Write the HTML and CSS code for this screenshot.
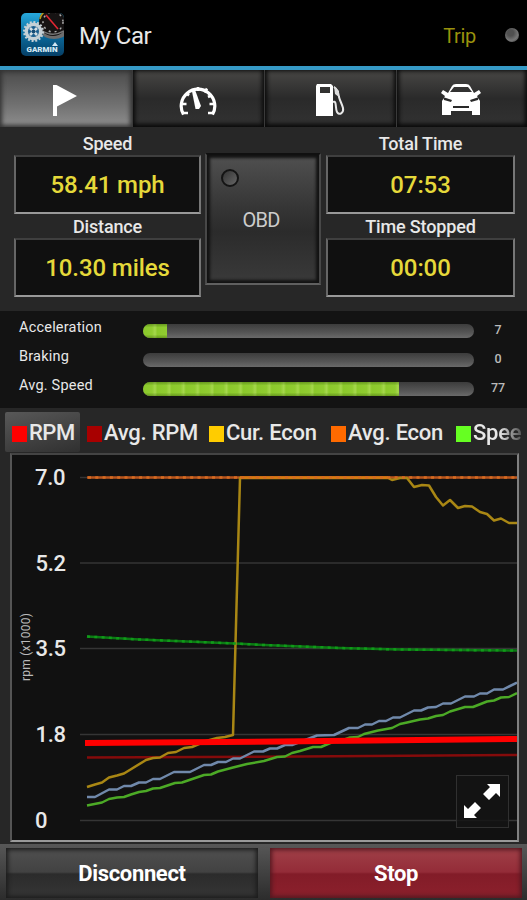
FILE: index.html
```
<!DOCTYPE html>
<html lang="en">

<head>
	<meta charset="UTF-8">
	<meta name="viewport" content="width=device-width, initial-scale=1.0">
	<title>My Car</title>
	<link rel="stylesheet" href="styles.css">
</head>

<body>
	<div class="app">
		<header class="header">
			<svg class="logo" viewBox="0 0 43 43">
				<defs>
					<linearGradient id="logoBg" x1="0" y1="0" x2="0" y2="1">
						<stop offset="0" stop-color="#27a9dc" />
						<stop offset="0.5" stop-color="#0b6c9e" />
						<stop offset="1" stop-color="#063f66" />
					</linearGradient>
					<clipPath id="logoClip"><rect width="43" height="43" rx="5" /></clipPath>
				</defs>
				<g clip-path="url(#logoClip)">
					<rect width="43" height="43" fill="url(#logoBg)" />
					<ellipse cx="33" cy="20" rx="12" ry="6" fill="#6d6d6d" />
					<circle cx="32" cy="9" r="14" fill="#161313" />
					<path d="M19 6a13 13 0 0 1 4-7" fill="none" stroke="#b69a19" stroke-width="1.5" />
					<circle cx="32" cy="9" r="10" fill="none" stroke="#aaa" stroke-width="1.5" stroke-dasharray="2 4" />
					<path d="M20 17q11 8 23 1" fill="none" stroke="#777" stroke-width="1.5" />
					<path d="M25 2l12 14" stroke="#e32632" stroke-width="1.6" />
					<circle cx="12.500" cy="18.500" r="9" fill="#c5d0d6" />
					<circle cx="12.500" cy="18.500" r="9.500" fill="none" stroke="#c5d0d6" stroke-width="2" stroke-dasharray="2 1.700" />
					<circle cx="12.500" cy="18.500" r="5.500" fill="#1c5f8f" />
					<path d="M9 15l7 7M9 22l7-7" stroke="#d5dfe4" stroke-width="2.500" />
					<circle cx="12.500" cy="18.500" r="2" fill="#164c75" />
					<path d="M31 33l3-4 3 4z" fill="#d3e8f3" />
					<text x="5.500" y="38.500" textLength="31" lengthAdjust="spacingAndGlyphs" class="logoText">GARMIN</text>
				</g>
			</svg>
			<h1 class="title">My Car</h1>
			<span class="trip">Trip</span>
			<span class="led"></span>
		</header>

		<nav class="tabs">
			<button class="tab active" aria-label="Trip">
				<svg width="24" height="31" viewBox="0 0 24 31">
					<path d="M0 0h3.500L24 11 4 21.500V31H0z" fill="#fff" />
				</svg>
			</button>
			<button class="tab" aria-label="Gauges">
				<svg width="38" height="32" viewBox="0 0 38 32">
					<g fill="none" stroke="#fff">
						<path d="M4.500 30.500A16.800 16.800 0 1 1 33.500 30.500" stroke-width="3.200" />
						<path d="M3 20h4.500M7 9l3 2.500M19 3v4M28 4.500l-2.500 4M33 11l-4 2M35 20h-4.500M3.500 29h5.500M34.500 29h-5.500" stroke-width="2.600" />
					</g>
					<path d="M12.500 5l3-.500 6.500 17.500-2 3-3.500 0z" fill="#fff" />
				</svg>
			</button>
			<button class="tab" aria-label="Fuel">
				<svg width="30" height="32" viewBox="0 0 30 32">
					<path d="M2 0h14l2 2v30H1V2zM5 3v6h10V3z" fill="#fff" fill-rule="evenodd" />
					<path d="M18 18c4-2 2 6 4 10 2 4 7 1 6-4-1-4-3-7-4-11-.500-5-2-8-5-10" fill="none" stroke="#e8e8e8" stroke-width="2" />
					<path d="M19 2l5 5v6l-4-3z" fill="#ddd" />
				</svg>
			</button>
			<button class="tab" aria-label="Vehicle">
				<svg width="40" height="32" viewBox="0 0 40 32">
					<path d="M7 9l4-7q1-2 4-2h10q3 0 4 2l4 7 5-3 2 3-4 3 3 5v14h-8v-4H10v4H1V17l3-5-4-3 2-3zM13 3l-4 5h22l-4-5z" fill="#fff" fill-rule="evenodd" />
					<path d="M2 13l9 3-1 2-7-2zM38 13l-9 3 1 2 7-2zM12 22h16v2H12z" fill="#292929" />
				</svg>
			</button>
		</nav>

		<section class="summary">
			<div class="metrics">
				<div class="label">Speed</div>
				<div class="readout">58.41 mph</div>
				<div class="label">Distance</div>
				<div class="readout">10.30 miles</div>
			</div>
			<div class="obdSlot">
				<button class="obd">
					<span class="obdLed"></span>
					<span class="obdText">OBD</span>
				</button>
			</div>
			<div class="metrics">
				<div class="label">Total Time</div>
				<div class="readout">07:53</div>
				<div class="label">Time Stopped</div>
				<div class="readout">00:00</div>
			</div>
		</section>

		<section class="meters">
			<div class="meter">
				<span class="meterName">Acceleration</span>
				<div class="track"><div class="fill" style="width: 7.300%"></div></div>
				<span class="meterValue">7</span>
			</div>
			<div class="meter">
				<span class="meterName">Braking</span>
				<div class="track"><div class="fill" style="width: 0%"></div></div>
				<span class="meterValue">0</span>
			</div>
			<div class="meter">
				<span class="meterName">Avg. Speed</span>
				<div class="track"><div class="fill" style="width: 77.300%"></div></div>
				<span class="meterValue">77</span>
			</div>
		</section>

		<div class="legend">
			<div class="series selected"><i class="swatch red"></i>RPM</div>
			<div class="series"><i class="swatch darkRed"></i>Avg. RPM</div>
			<div class="series"><i class="swatch yellow"></i>Cur. Econ</div>
			<div class="series"><i class="swatch orange"></i>Avg. Econ</div>
			<div class="series fading"><i class="swatch green"></i>Spee</div>
		</div>

		<section class="chart">
			<svg class="plot" viewBox="12 455 505 385">
				<path class="grid" d="M80 477.500H517M80 563H517M80 648.500H517M80 734.500H517M80 820.500H517" />
				<g class="axis">
					<text x="35" y="485">7.0</text>
					<text x="35.500" y="570.500">5.2</text>
					<text x="35.500" y="656">3.5</text>
					<text x="35.500" y="742">1.8</text>
					<text x="35" y="828">0</text>
				</g>
				<text class="unit" transform="translate(29.500 681) rotate(-90)" textLength="68">rpm (x1000)</text>

				<g class="lines">
					<path stroke="#b9541c" d="M87 477.500H517" />
					<path stroke="#0c7a14" d="M87 636.500L140 639.500 235 643.500 264 645 340 648 400 649.500 517 650.500" />
					<path stroke="#850b0b" d="M87 757.500L300 756.500 517 755" />
					<path stroke="#a98714" d="M87 787L95 784.500 102 782.500 109 777.500 117 775.500 124 773.500 146 760 153 758 160 757.500 168 753 176 752 184 748 192 747 206 741 217 738 225 737 233 735 240 478H388L392 480 400 478H407L414 487 422 485 429 485.500 436 497 443 505.500 450 500 458 508 465 506 472 506.500 480 512 487 514 494 520.500 501 518.500 509 523H517" />
					<path stroke="#7089ab" d="M87 797H95L109 789.500H117L124 786H131L139 782.500H146L153 779H160L174 772H190L204 765H211L218 762H226L233 758.500H240L254 751.500H263L270 748.500H277L285 745H292L317 735.500 334 735 349 728H358L365 724.500H372L379 721H386L393 717.500H400L414 710.500H421L428 707.500 436 707 443 703.500H451L465 696.500H474L480 693.500H487L494 689.500H503L517 682.500" />
					<path stroke="#4caa26" d="M87 805.500L102 802.500 109 799 117 797.500 124 797 131 794.500 139 792 146 791 153 788.500 160 788 175 783 182 782.500 204 775 211 774.500 218 771.500 233 767.500 247 764 264 761 277 757 285 756.500 292 753 300 751 313 747H321L335 741 343 740 350 737.500 358 737 364 734 378 730.500 392 728 400 724 407 722.500 420 719.500 428 718.500 436 716 443 715 450 711.500 465 707H473L487 701.500 494 700.500 501 697.500 509 697 517 693" />
					<path stroke="#d97812" d="M240 477.500H388" />
				</g>
				<g class="dots">
					<path stroke="#d56b22" d="M88 477.500H517" />
					<path stroke="#109a19" d="M87 636.500L140 639.500 235 643.500 264 645 340 648 400 649.500 517 650.500" />
				</g>
				<path class="current" d="M85 743L280 741.500 517 739" />
			</svg>
			<button class="expand" aria-label="Expand chart">
				<svg width="36" height="36" viewBox="0 0 36 36">
					<path d="M23 1h13v13l-4-4-7 7-6-6 7-7zM13 35H0V22l4 4 7-7 6 6-7 7z" fill="#fff" />
				</svg>
			</button>
		</section>

		<footer class="actions">
			<button class="action">Disconnect</button>
			<button class="action stop">Stop</button>
		</footer>
	</div>
</body>

</html>
```
FILE: styles.css
```
body,
html {
	margin: 0;
	padding: 0;
	height: 100%;
	background-color: #272727;
}

button {
	margin: 0;
	padding: 0;
	border: none;
	font: inherit;
	color: inherit;
	cursor: pointer;
}

svg {
	display: block;
}

.app {
	width: 527px;
	height: 900px;
	display: flex;
	flex-direction: column;
	overflow: hidden;
	font-family: Roboto, "Liberation Sans", sans-serif;
	color: #e8e8e8;
}

.header {
	flex: 0 0 66px;
	display: flex;
	align-items: center;
	padding: 4px 8px 0 21px;
	box-sizing: border-box;
	background-color: #000;
}

.logo {
	width: 43px;
	height: 43px;
	margin-top: -2px;
}

.logoText {
	font-size: 6.500px;
	font-weight: 900;
	fill: #d3e8f3;
}

.title {
	flex: 1;
	margin: 2px 0 0 15px;
	font-size: 24px;
	font-weight: 400;
	line-height: 28px;
	letter-spacing: -0.500px;
}

.trip {
	margin: 2px 29px 0 0;
	font-size: 20px;
	letter-spacing: -0.300px;
	color: #99920d;
}

.led {
	width: 14px;
	height: 14px;
	border-radius: 50%;
	background: radial-gradient(circle at 40% 35%, #505050 25%, #777 60%, #333);
}

.tabs {
	flex: 0 0 61px;
	display: grid;
	grid-template-columns: 132px 132px 132px 131px;
	box-sizing: border-box;
	border-top: 4px solid #369ac6;
	background-color: #080808;
}

.tab {
	display: flex;
	align-items: center;
	justify-content: center;
	padding: 3px 2px 0 0;
	box-sizing: border-box;
	border-left: 1px solid #3a3a3a;
	background: linear-gradient(#484745, #2a2a2a 50%, #323232);
	box-shadow: inset 0 -1px 4px 2px #090909;
}

.tab.active {
	border-left: 0;
	background: linear-gradient(#4c4c4c, #707070 60%, #8e8e8e);
	box-shadow: inset 0 0 4px 2px #333;
}

.summary {
	flex: 0 0 184px;
	display: grid;
	grid-template-columns: 187px 117px 189px;
	column-gap: 4px;
	padding: 4px 0 0 14px;
	box-sizing: border-box;
	background-color: #272727;
}

.label {
	height: 24px;
	line-height: 26px;
	font-size: 18px;
	font-weight: 500;
	letter-spacing: -0.150px;
	text-align: center;
}

.readout {
	height: 59px;
	box-sizing: border-box;
	border: 2px solid #777;
	border-color: #3f3f3f #777 #999 #666;
	background-color: #101010;
	line-height: 57px;
	font-size: 24px;
	font-weight: 500;
	letter-spacing: -0.100px;
	text-align: center;
	color: #e5d93a;
}

.obdSlot {
	padding-top: 22px;
}

.obd {
	width: 116px;
	height: 132px;
	display: flex;
	flex-direction: column;
	padding: 14px 18px 0 14px;
	box-sizing: border-box;
	border: 2px solid #111;
	border-color: #101010 #484848 #606060 #484848;
	background: linear-gradient(#505050, #333 45%, #2b2b2b 60%, #3a3a3a);
	box-shadow: inset 0 0 3px 3px #121212;
}

.obdLed {
	width: 14px;
	height: 14px;
	border: 2px solid #141414;
	border-radius: 50%;
	background: linear-gradient(135deg, #333, #666);
}

.obdText {
	margin-top: 21px;
	font-size: 20px;
	line-height: 24px;
	letter-spacing: -0.700px;
	text-align: center;
	color: #ccc;
}

.meters {
	flex: 0 0 97px;
	display: flex;
	flex-direction: column;
	padding: 5px 0 0 19px;
	box-sizing: border-box;
	background-color: #131313;
}

.meter {
	height: 29px;
	display: grid;
	grid-template-columns: 124px 331px 48px;
	align-items: center;
}

.meterName {
	padding-bottom: 7px;
	font-size: 14.500px;
	letter-spacing: 0.200px;
}

.track {
	height: 14px;
	border-radius: 7px;
	overflow: hidden;
	background: linear-gradient(#3c3c3c, #555 60%, #6a6a6a);
}

.fill {
	height: 100%;
	background:
		linear-gradient(rgba(30, 60, 0, 0.350), transparent 25%, transparent 75%, rgba(30, 60, 0, 0.350)),
		repeating-linear-gradient(90deg, #8bc92b 0, #90cc31 9px, #a5d84c 12px, #8bc92b 14.300px);
}

.meterValue {
	font-size: 12.500px;
	font-weight: 500;
	padding-bottom: 3px;
	text-align: center;
	color: #bbb;
}

.legend {
	flex: 0 0 45px;
	display: grid;
	grid-template-columns: 75px 122px 122px 125px 76px;
	padding: 4px 0 0 5px;
	box-sizing: border-box;
	background-color: #272727;
}

.series {
	height: 40px;
	display: flex;
	align-items: center;
	padding-left: 7px;
	box-sizing: border-box;
	font-size: 22px;
	font-weight: 500;
	letter-spacing: -0.250px;
	white-space: nowrap;
}

.series.selected {
	background: linear-gradient(165deg, #585858, #444 50%, #303030);
	border-radius: 2px;
	letter-spacing: -0.500px;
}

.series.fading {
	-webkit-mask-image: linear-gradient(90deg, #000 50px, rgba(0, 0, 0, 0.300) 70px);
	mask-image: linear-gradient(90deg, #000 50px, rgba(0, 0, 0, 0.300) 70px);
}

.swatch {
	flex: 0 0 15px;
	height: 16px;
	margin: 3px 2px 0 0;
}

.red {
	background-color: #f00;
}

.darkRed {
	background-color: #a80000;
}

.yellow {
	background-color: #fc0;
}

.orange {
	background-color: #ff6a00;
}

.green {
	background-color: #66ff22;
}

.chart {
	flex: 0 0 389px;
	position: relative;
	margin: 0 8px 0 10px;
	box-sizing: border-box;
	border: 2px solid #777;
	border-color: #444 #808080 #999 #555;
	background-color: #111;
}

.plot {
	width: 505px;
	height: 385px;
}

.grid {
	stroke: #353535;
	stroke-width: 1.500;
}

.axis {
	font-size: 22px;
	font-weight: 500;
	letter-spacing: -0.300px;
	fill: #e8e8e8;
}

.unit {
	font-size: 12px;
	fill: #bbb;
}

.lines path,
.dots path {
	fill: none;
	stroke-width: 2.500;
	stroke-linejoin: round;
}

.dots path {
	stroke-dasharray: 3 4.300;
}

.current {
	fill: none;
	stroke: #f00;
	stroke-width: 6;
}

.expand {
	position: absolute;
	right: 8px;
	bottom: 12px;
	width: 53px;
	height: 53px;
	display: flex;
	align-items: center;
	justify-content: center;
	border: 1px solid #303030;
	box-sizing: border-box;
	background-color: rgba(20, 20, 20, 0.850);
}

.expand svg {
	margin: 0 1px 1px 0;
}

.actions {
	flex: 1;
	display: grid;
	grid-template-columns: 252px 252px;
	column-gap: 12px;
	padding: 4px 0 2px 6px;
	margin-top: 2px;
	background: linear-gradient(#575757, #2c2c2c);
}

.action {
	background: linear-gradient(#505050, #424242 48%, #2b2b2b 52%, #363636);
	box-shadow: inset 0 0 4px 2px #1c1c1c;
	font-size: 22px;
	font-weight: 700;
	letter-spacing: -0.350px;
	color: #fff;
}

.action.stop {
	background: linear-gradient(#a04048, #942c38 48%, #821c28 52%, #8c202c);
	box-shadow: inset 0 0 4px 2px #541820;
}
```
